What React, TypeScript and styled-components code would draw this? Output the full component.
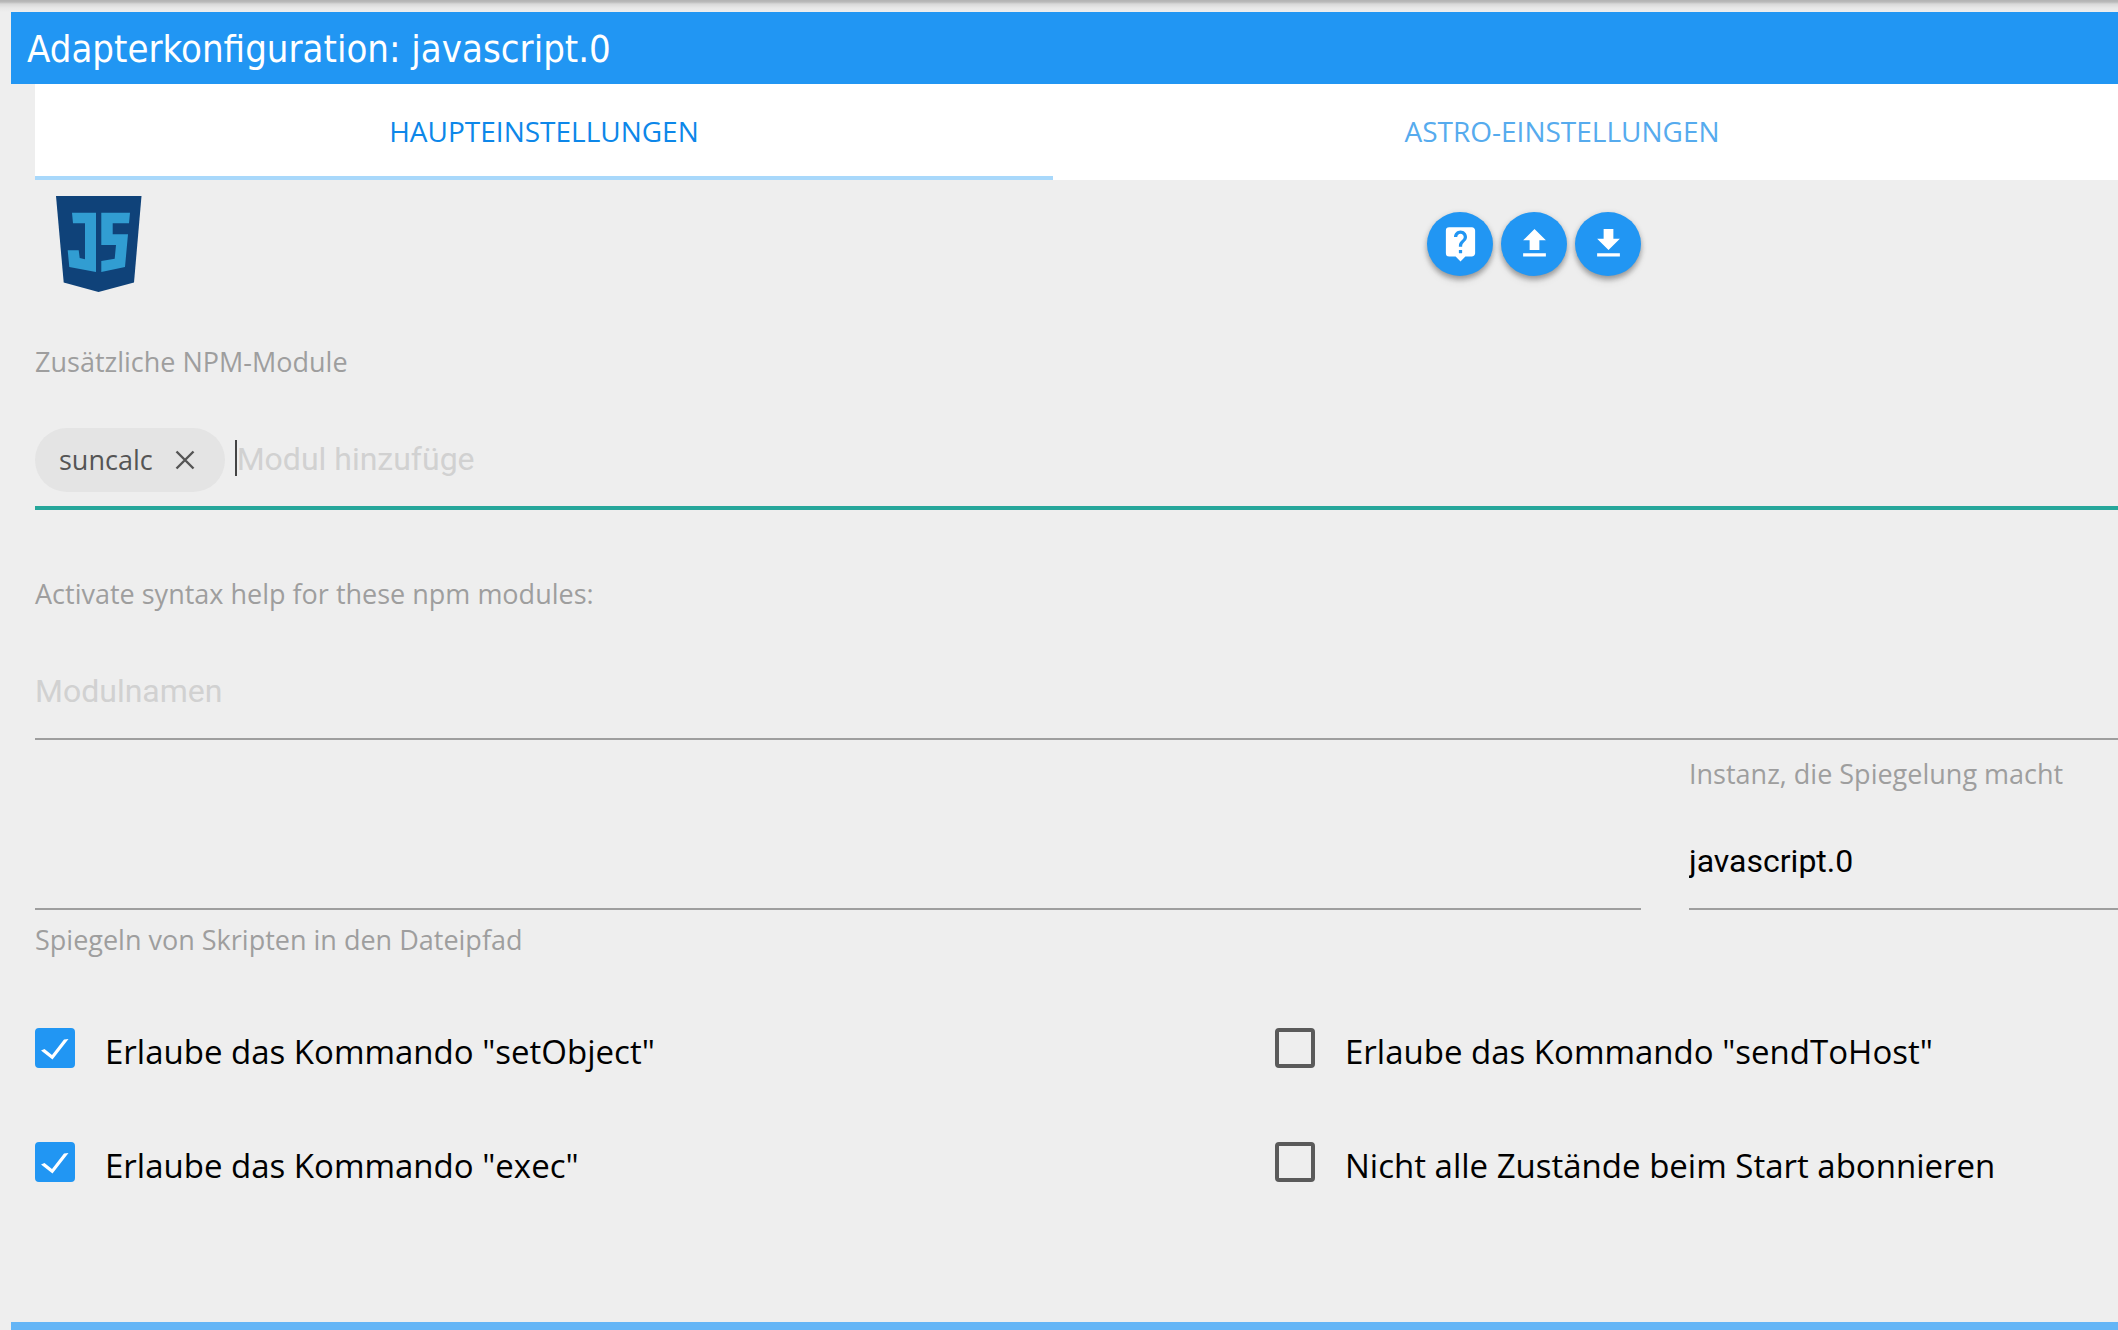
import React, { useState } from "react";
import styled, { createGlobalStyle } from "styled-components";

const colors = {
  page: "#eeeeee",
  primary: "#2196f3",
  footer: "#64b5f6",
  teal: "#26a69a",
  muted: "#9e9e9e",
  placeholder: "#d1d1d1",
  chip: "#e4e4e4",
  box: "#5a5a5a",
};

const labelFont = `"Open Sans", "Noto Sans", sans-serif`;
const inputFont = `Roboto, "Liberation Sans", sans-serif`;

const GlobalStyle = createGlobalStyle`
  *, *::before, *::after { box-sizing: border-box; }
  body {
    margin: 0;
    background: ${colors.page};
    font-family: ${labelFont};
    color: #000;
  }
`;

const Page = styled.div`
  min-height: 100vh;
  display: flex;
  flex-direction: column;
`;

const TopShadow = styled.div`
  height: 12px;
  background: linear-gradient(#b2b2b2 0, #bababa 2px, #d8d8d8 4px, #e8e8e8 8px, ${colors.page} 12px);
`;

const Header = styled.header`
  margin-left: 11px;
  padding: 2px 16px 0;
  background: ${colors.primary};
`;

const Title = styled.h1`
  margin: 0;
  font: 400 38px/70px "DejaVu Sans Condensed", "DejaVu Sans", sans-serif;
  color: #fff;
`;

const Main = styled.main`
  padding-left: 35px;
`;

const TabBar = styled.nav`
  display: grid;
  grid-template-columns: 1fr 1fr;
  height: 96px;
  padding-right: 47px;
  background: #fff;
`;

const Tab = styled.button<{ $active: boolean }>`
  border: 0;
  padding: 2px 0 0;
  border-bottom: 4px solid ${p => (p.$active ? "#a8d8fb" : "transparent")};
  background: none;
  font: 400 28px/36px ${labelFont};
  text-transform: uppercase;
  color: ${p => (p.$active ? "#0d87e9" : "#56abee")};
  cursor: pointer;
`;

const Split = styled.div`
  display: grid;
  grid-template-columns: 1606fr 429fr;
  column-gap: 48px;
`;

const Toolbar = styled(Split)`
  padding-top: 16px;
  margin-bottom: 51px;
`;

const ToolbarContent = styled.div`
  display: flex;
  justify-content: space-between;
  align-items: center;
  padding-left: 21px;
`;

const Actions = styled.div`
  display: flex;
  gap: 8px;
`;

const RoundButton = styled.button`
  display: flex;
  align-items: center;
  justify-content: center;
  width: 66px;
  height: 64px;
  padding: 0 0 2px;
  border: 0;
  border-radius: 50%;
  background: ${colors.primary};
  color: #fff;
  box-shadow: 0 4px 4px rgba(0, 0, 0, 0.14), 0 6px 10px -2px rgba(0, 0, 0, 0.12), 0 2px 6px rgba(0, 0, 0, 0.2);
  cursor: pointer;
`;

const Label = styled.label`
  display: block;
  font: 400 27px/38px ${labelFont};
  color: ${colors.muted};
`;

const Field = styled.section<{ $after?: number }>`
  margin-bottom: ${p => p.$after ?? 0}px;
`;

const Line = styled.div<{ $focused?: boolean; $top?: number }>`
  display: flex;
  align-items: center;
  margin-top: ${p => p.$top ?? 47}px;
  padding-bottom: 14px;
  border-bottom: ${p => (p.$focused ? `4px solid ${colors.teal}` : `2px solid ${colors.muted}`)};
`;

const TextInput = styled.input<{ $width?: number }>`
  width: ${p => (p.$width ? `${p.$width}px` : "100%")};
  height: 64px;
  padding: 0 0 2px;
  border: 0;
  outline: 0;
  background: none;
  font: 400 32px/62px ${inputFont};
  color: #000;
  &::placeholder { color: ${colors.placeholder}; opacity: 1; }
`;

const Select = styled.select`
  width: 100%;
  height: 64px;
  padding: 0 0 2px;
  border: 0;
  outline: 0;
  appearance: none;
  background: none;
  font: 400 32px/62px ${inputFont};
  color: #000;
`;

const Caret = styled.span`
  width: 2px;
  height: 36px;
  margin-bottom: 4px;
  background: #444;
`;

const Chip = styled.span`
  display: flex;
  align-items: center;
  gap: 20px;
  height: 64px;
  margin-right: 10px;
  padding: 0 28px 0 24px;
  border-radius: 32px;
  background: ${colors.chip};
  font: 400 27px/38px ${labelFont};
  color: #555;
`;

const ChipClose = styled.button`
  display: flex;
  padding: 0;
  border: 0;
  background: none;
  color: inherit;
  cursor: pointer;
`;

const MirrorRow = styled(Split)`
  align-items: end;
  margin: 15px 0 11px;
`;

const Options = styled.div`
  display: grid;
  grid-template-columns: 1240fr 843fr;
  row-gap: 66px;
  margin-top: 69px;
`;

const Option = styled.label`
  display: grid;
  grid-template-columns: 40px 1fr;
  column-gap: 30px;
  font: 400 33px/48px ${labelFont};
`;

const BoxInput = styled.input`
  grid-area: 1 / 1;
  appearance: none;
  width: 40px;
  height: 40px;
  margin: 0;
  border: 4px solid ${colors.box};
  border-radius: 4px;
  &:checked {
    border-color: ${colors.primary};
    background: ${colors.primary};
  }
  &:not(:checked) + svg { display: none; }
`;

const Tick = styled.svg`
  grid-area: 1 / 1;
  width: 40px;
  height: 40px;
  pointer-events: none;
`;

const Footer = styled.footer`
  height: 8px;
  margin: auto 0 0 11px;
  background: ${colors.footer};
`;

const icons = {
  help: "M19 2H5a2 2 0 0 0-2 2v14a2 2 0 0 0 2 2h4l3 3 3-3h4c1.1 0 2-.9 2-2V4c0-1.1-.9-2-2-2zm-6 16h-2v-2h2v2zm2.07-7.75l-.9.92C13.45 11.9 13 12.5 13 14h-2v-.5c0-1.1.45-2.1 1.17-2.83l1.24-1.26c.37-.36.59-.86.59-1.41 0-1.1-.9-2-2-2s-2 .9-2 2H8c0-2.21 1.79-4 4-4s4 1.79 4 4c0 .88-.36 1.68-.93 2.25z",
  upload: "M9 16h6v-6h4l-7-7-7 7h4zm-4 2h14v2H5z",
  download: "M19 9h-4V3H9v6H5l7 7 7-7zM5 18v2h14v-2H5z",
};

const ActionIcon = ({ path }: { path: string }) => (
  <svg width="39" height="39" viewBox="0 0 24 24" fill="currentColor" aria-hidden="true">
    <path d={path} />
  </svg>
);

const Logo = () => (
  <svg width="86" height="96" viewBox="0 0 86 96" role="img" aria-label="javascript">
    <path fill="#0f4279" d="M0 0H85.5L78 86.5 42.5 96 7.7 86.5Z" />
    <path fill="#319dd2" d="M16 16.7H40V76L13.3 71 11.7 54.3H22.7L23.7 62 29 63.3V27.3H17Z" />
    <path fill="#319dd2" d="M45.3 16.7H74L73 27.3H56.7V38.3H72L69 71 45.3 76V65L58.7 62.7 60 49H45.3Z" />
  </svg>
);

const CheckOption = ({ text, initial }: { text: string; initial: boolean }) => {
  const [checked, setChecked] = useState(initial);
  return (
    <Option>
      <BoxInput type="checkbox" checked={checked} onChange={e => setChecked(e.target.checked)} />
      <Tick viewBox="0 0 40 40" aria-hidden="true">
        <path fill="#fff" d="M6 22.5 9.5 21 17 27 29 11.5 33.5 11 17.5 31.5Z" />
      </Tick>
      <span>{text}</span>
    </Option>
  );
};

const tabs = ["Haupteinstellungen", "Astro-Einstellungen"];

export default function App() {
  const [active, setActive] = useState(0);
  const [modules, setModules] = useState(["suncalc"]);

  return (
    <Page>
      <GlobalStyle />
      <TopShadow />
      <Header>
        <Title>Adapterkonfiguration: javascript.0</Title>
      </Header>
      <Main>
        <TabBar>
          {tabs.map((name, i) => (
            <Tab key={name} type="button" $active={i === active} onClick={() => setActive(i)}>
              {name}
            </Tab>
          ))}
        </TabBar>

        <Toolbar>
          <ToolbarContent>
            <Logo />
            <Actions>
              <RoundButton type="button" aria-label="Hilfe"><ActionIcon path={icons.help} /></RoundButton>
              <RoundButton type="button" aria-label="Hochladen"><ActionIcon path={icons.upload} /></RoundButton>
              <RoundButton type="button" aria-label="Herunterladen"><ActionIcon path={icons.download} /></RoundButton>
            </Actions>
          </ToolbarContent>
        </Toolbar>

        <Field $after={65}>
          <Label htmlFor="modules">Zusätzliche NPM-Module</Label>
          <Line $focused>
            {modules.map(name => (
              <Chip key={name}>
                {name}
                <ChipClose
                  type="button"
                  aria-label={`${name} entfernen`}
                  onClick={() => setModules(modules.filter(m => m !== name))}
                >
                  <svg width="24" height="24" viewBox="0 0 24 24" fill="none" stroke="currentColor" strokeWidth="2.4">
                    <path d="M3.5 3.5 20.5 20.5M20.5 3.5 3.5 20.5" />
                  </svg>
                </ChipClose>
              </Chip>
            ))}
            <Caret />
            <TextInput id="modules" $width={238} placeholder="Modul hinzufüge" />
          </Line>
        </Field>

        <Field>
          <Label htmlFor="syntax">Activate syntax help for these npm modules:</Label>
          <Line>
            <TextInput id="syntax" placeholder="Modulnamen" />
          </Line>
        </Field>

        <MirrorRow>
          <Line $top={0}>
            <TextInput id="mirror" />
          </Line>
          <Field>
            <Label htmlFor="instance">Instanz, die Spiegelung macht</Label>
            <Line $top={37}>
              <Select id="instance" defaultValue="javascript.0">
                <option>javascript.0</option>
              </Select>
            </Line>
          </Field>
        </MirrorRow>
        <Label htmlFor="mirror">Spiegeln von Skripten in den Dateipfad</Label>

        <Options>
          <CheckOption text={'Erlaube das Kommando "setObject"'} initial />
          <CheckOption text={'Erlaube das Kommando "sendToHost"'} initial={false} />
          <CheckOption text={'Erlaube das Kommando "exec"'} initial />
          <CheckOption text="Nicht alle Zustände beim Start abonnieren" initial={false} />
        </Options>
      </Main>
      <Footer />
    </Page>
  );
}
